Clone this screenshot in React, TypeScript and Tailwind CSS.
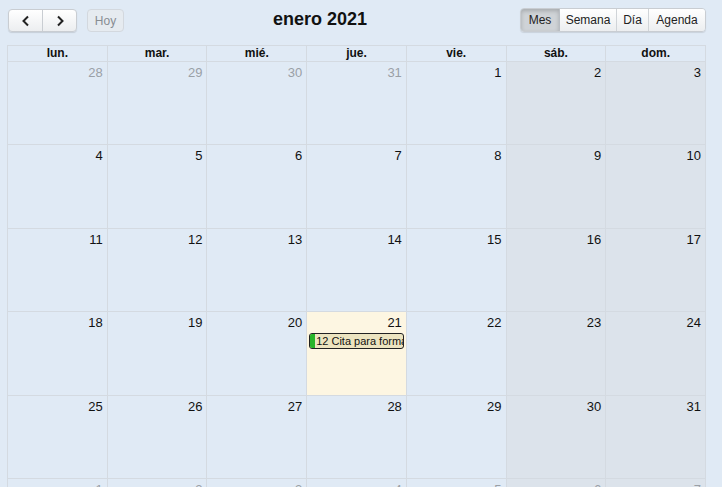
import React from "react";

const weekdays = ["lun.", "mar.", "mié.", "jue.", "vie.", "sáb.", "dom."];

type Cell = { d: number; other: boolean };

const weeks: Cell[][] = (() => {
  const rows: Cell[][] = [];
  const first: Cell[] = [28, 29, 30, 31].map((d) => ({ d, other: true }));
  let day = 1;
  while (first.length < 7) first.push({ d: day++, other: false });
  rows.push(first);
  while (rows.length < 6) {
    const r: Cell[] = [];
    for (let i = 0; i < 7; i++) {
      if (day > 31) {
        r.push({ d: day - 31, other: true });
      } else {
        r.push({ d: day, other: false });
      }
      day++;
    }
    rows.push(r);
  }
  return rows;
})();

function Chevron({ dir }: { dir: "left" | "right" }) {
  return (
    <svg width="10" height="12" viewBox="0 0 10 12" fill="none">
      {dir === "left" ? (
        <path d="M7 1.5 L2.5 6 L7 10.5" stroke="#222" strokeWidth="2" />
      ) : (
        <path d="M3 1.5 L7.5 6 L3 10.5" stroke="#222" strokeWidth="2" />
      )}
    </svg>
  );
}

export default function App() {
  return (
    <div
      className="w-[722px] h-[487px] overflow-hidden bg-[#e0eaf5] text-[#111]"
      style={{ fontFamily: '"Liberation Sans", Arial, sans-serif' }}
    >
      <div className="flex items-start pl-[8px] pr-[16px] pt-[8px] h-[45px]">
        <div className="flex items-center gap-[10px] mt-[1px]">
          <div className="flex h-[23px] rounded-[4px] border border-[#c9cdd2] shadow-[0_1px_1px_rgba(0,0,0,0.12)] bg-gradient-to-b from-[#ffffff] to-[#eceef0] overflow-hidden">
            <button className="w-[34px] flex items-center justify-center border-r border-[#c9cdd2]">
              <Chevron dir="left" />
            </button>
            <button className="w-[33px] flex items-center justify-center">
              <Chevron dir="right" />
            </button>
          </div>
          <button className="h-[23px] w-[37px] rounded-[4px] border border-[#d3d8de] bg-[#e6ebf0] text-[12px] text-[#888d93]">
            Hoy
          </button>
        </div>
        <div className="flex-1 text-center text-[18px] font-bold leading-[20px] pt-[1px] pr-[4px]">
          enero 2021
        </div>
        <div className="flex h-[24px] rounded-[4px] border border-[#c9cdd2] shadow-[0_1px_1px_rgba(0,0,0,0.1)] overflow-hidden text-[12px] text-[#222]">
          <div className="w-[39px] flex items-center justify-center bg-[#cfd3d7] shadow-[inset_0_2px_4px_rgba(0,0,0,0.2)] border-r border-[#b9bec4]">
            Mes
          </div>
          <div className="w-[57px] flex items-center justify-center bg-gradient-to-b from-[#ffffff] to-[#eceef0] border-r border-[#d0d4d8]">
            Semana
          </div>
          <div className="w-[32px] flex items-center justify-center bg-gradient-to-b from-[#ffffff] to-[#eceef0] border-r border-[#d0d4d8]">
            Día
          </div>
          <div className="w-[56px] flex items-center justify-center bg-gradient-to-b from-[#ffffff] to-[#eceef0]">
            Agenda
          </div>
        </div>
      </div>

      <div className="ml-[7px] w-[699px] border-l border-t border-[#d4dae1]">
        <div className="grid grid-cols-7">
          {weekdays.map((w) => (
            <div
              key={w}
              className="h-[16px] border-r border-b border-[#d4dae1] text-center text-[12px] font-bold leading-[15px]"
            >
              {w}
            </div>
          ))}
        </div>
        {weeks.map((row, ri) => (
          <div key={ri} className="grid grid-cols-7 h-[83.4px]">
            {row.map((c, ci) => {
              const weekend = ci >= 5;
              const today = !c.other && c.d === 21;
              const bg = today
                ? "bg-[#fdf6e2]"
                : weekend
                ? "bg-[#dce3eb]"
                : "bg-[#e0eaf5]";
              return (
                <div
                  key={ci}
                  className={`relative border-r border-b border-[#d4dae1] ${bg}`}
                >
                  <div
                    className={`text-right pr-[4px] pt-[3px] text-[13px] leading-[15px] ${
                      c.other ? "text-[#9aa0a6]" : "text-[#111]"
                    }`}
                  >
                    {c.d}
                  </div>
                  {today && (
                    <div className="mt-[3px] ml-[2px] mr-[2px] h-[16px] flex rounded-[3px] border border-[#222] bg-[#ece4c0] overflow-hidden">
                      <div className="w-[5px] shrink-0 bg-[#27b52a]" />
                      <div className="pl-[1px] text-[11px] leading-[14px] whitespace-nowrap overflow-hidden">
                        12 Cita para formación
                      </div>
                    </div>
                  )}
                </div>
              );
            })}
          </div>
        ))}
      </div>
    </div>
  );
}
